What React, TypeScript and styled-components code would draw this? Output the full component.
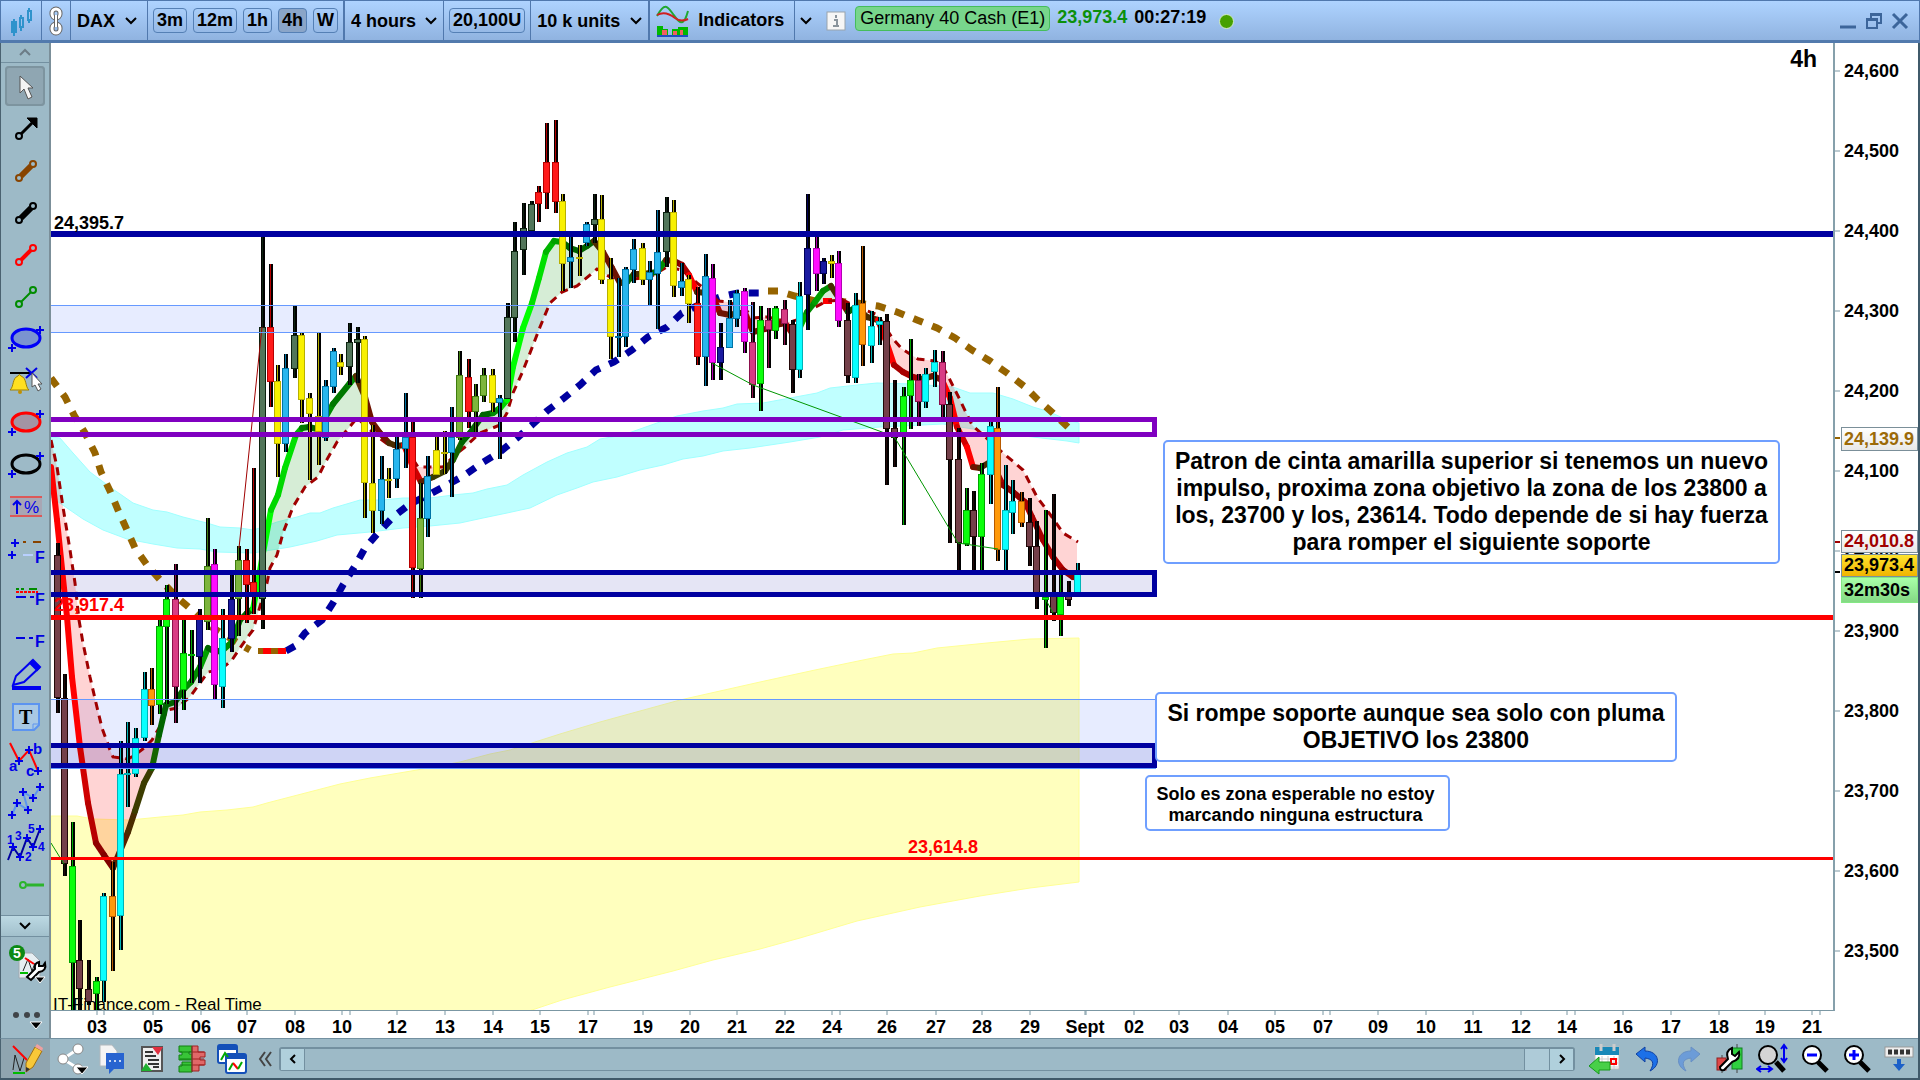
import React from "react";
import styled, { createGlobalStyle, css } from "styled-components";

const GlobalStyle = createGlobalStyle`
  * { box-sizing: border-box; }
  body { margin: 0; background: #405a6a; font-family: "Liberation Sans", Arial, sans-serif; color: #000; }
  button, select { font: inherit; color: inherit; }
`;

/* ---------- layout ---------- */

const Window = styled.div`
  display: flex;
  flex-direction: column;
  height: 100vh;
  padding: 0 2px 2px 0;
  overflow: hidden;
`;

const TopBar = styled.header`
  flex: none;
  display: flex;
  align-items: stretch;
  height: 43px;
  margin-right: -2px;
  border: 1px solid #5078ad;
  border-bottom: 3px solid #527aad;
  background: linear-gradient(#aed3ff, #90b3e0);
  font-size: 18px;
  font-weight: bold;
`;

const Group = styled.div<{ $w?: number; $strong?: boolean; $pad?: number }>`
  display: flex;
  align-items: center;
  justify-content: space-between;
  gap: 6px;
  padding: 0 ${(p) => p.$pad ?? 6}px 0 ${(p) => (p.$pad === 5 ? 5 : 6)}px;
  min-width: ${(p) => (p.$w ? `${p.$w}px` : "auto")};
  border-right: ${(p) => (p.$strong ? 2 : 1)}px solid #5078ad;
`;

const plainButton = css`
  display: flex;
  align-items: center;
  justify-content: center;
  padding: 0;
  border: 0;
  background: none;
`;

const IconButton = styled.button`
  ${plainButton}
`;

const FrameButton = styled.button<{ $on?: boolean }>`
  height: 25px;
  padding: 0 3px;
  border: 1px solid #5580b5;
  border-radius: 4px;
  background: ${(p) => (p.$on ? "#8aa5c8" : "transparent")};
  font-weight: bold;
  line-height: 23px;
  white-space: nowrap;
`;

const Picker = styled.label`
  display: flex;
  flex: 1;
  align-items: center;
  justify-content: space-between;
`;

const Select = styled.select`
  appearance: none;
  border: 0;
  padding: 0;
  background: none;
  font-weight: bold;
`;

const IndicatorButton = styled.button`
  ${plainButton}
  gap: 8px;
  font-weight: bold;
`;

const Quote = styled.div`
  flex: 1;
  display: flex;
  align-items: flex-start;
  gap: 7px;
  padding: 5px 0 0 7px;
  line-height: 23px;
`;

const Instrument = styled.span`
  padding: 0 4px;
  border: 1px solid #45bd5c;
  border-radius: 4px;
  background: #78d58c;
  font-weight: normal;
`;

const LastPrice = styled.span`
  color: #0b900b;
`;

const InfoButton = styled.button`
  ${plainButton}
  margin: 5px 2px 0 0;
`;

const LiveDot = styled.span`
  width: 15px;
  height: 15px;
  margin: 8px 0 0 6px;
  border: 1px solid #d4ecc8;
  border-radius: 50%;
  background: #45a000;
`;

const WindowControls = styled.div`
  display: flex;
  align-items: center;
  gap: 8px;
  padding-right: 10px;
`;

const Middle = styled.div`
  flex: 1;
  display: flex;
  min-height: 0;
`;

const Sidebar = styled.nav`
  flex: none;
  display: flex;
  flex-direction: column;
  width: 51px;
  border-left: 1px solid #4a6270;
  border-right: 2px solid #7b8f99;
  background: #9dbac7;
`;

const EdgeButton = styled.button<{ $raised?: boolean }>`
  ${plainButton}
  flex: none;
  height: ${(p) => (p.$raised ? 22 : 20)}px;
  border-bottom: 1px solid #7390a0;
  ${(p) =>
    p.$raised &&
    css`
      border-top: 1px solid #7390a0;
      background: linear-gradient(#bcd9e3, #a2c0cc);
    `}
`;

const Tools = styled.div`
  flex: 1;
  padding-top: 2px;
  min-height: 0;
  overflow: hidden;
`;

const Tool = styled.button<{ $on?: boolean }>`
  ${plainButton}
  width: 48px;
  height: 42px;
  ${(p) =>
    p.$on &&
    css`
      box-shadow: inset 0 0 0 2px #7d949f;
      background: #8fa6b2;
      border-radius: 4px;
      width: 40px;
      height: 40px;
      margin: 1px 4px;
    `}
`;

const SideMenu = styled.button<{ $h: number }>`
  ${plainButton}
  flex: none;
  width: 48px;
  height: ${(p) => p.$h}px;
`;

const Workspace = styled.main`
  flex: 1;
  min-width: 0;
  display: grid;
  grid-template-columns: 1fr 83px;
  grid-template-rows: 1fr 27px;
  background: #fff;
`;

const ChartPane = styled.section`
  position: relative;
  min-height: 0;
  overflow: hidden;
  border-right: 2px solid #86a0ab;
  border-bottom: 1px solid #7b97a3;
`;

const Drawing = styled.svg`
  display: block;
  width: 100%;
  height: 100%;
  font-size: 18px;
  font-weight: bold;
`;

const PriceAxis = styled.aside`
  position: relative;
  overflow: hidden;
`;

const TimeAxis = styled.div`
  grid-column: 1 / -1;
  overflow: hidden;
`;

const Note = styled.div<{ $x: number; $y: number; $w: number; $small?: boolean }>`
  position: absolute;
  left: ${(p) => p.$x}px;
  top: ${(p) => p.$y}px;
  width: ${(p) => p.$w}px;
  padding: ${(p) => (p.$small ? "7px 8px 3px 4px" : "6px 0")};
  border: 2px solid #6f9fff;
  border-radius: 5px;
  background: #fff;
  font-size: ${(p) => (p.$small ? 18 : 23)}px;
  font-weight: bold;
  line-height: ${(p) => (p.$small ? 21 : 27)}px;
  text-align: center;
  white-space: pre-line;
`;

const Tag = styled.span<{ $y: number; $h: number; $bg: string; $fg: string; $edge: string }>`
  position: absolute;
  left: 6px;
  right: 0;
  top: ${(p) => p.$y}px;
  height: ${(p) => p.$h}px;
  padding-left: 2px;
  border: 1px solid ${(p) => p.$edge};
  background: ${(p) => p.$bg};
  color: ${(p) => p.$fg};
  font-size: 18px;
  font-weight: bold;
  line-height: ${(p) => p.$h - 2}px;
`;

const BottomBar = styled.footer`
  flex: none;
  display: flex;
  align-items: center;
  height: 40px;
  padding-right: 4px;
  border-top: 1px solid #7390a0;
  border-left: 1px solid #4a6270;
  background: #9dbac7;
`;

const DrawCell = styled.button`
  ${plainButton}
  width: 49px;
  height: 39px;
  margin-right: 6px;
  background: #8fa5b0;
`;

const BarIcons = styled.div<{ $gap: number }>`
  display: flex;
  align-items: center;
  gap: ${(p) => p.$gap}px;
`;

const ScrollTrack = styled.div`
  flex: 1;
  display: flex;
  height: 24px;
  margin: 0 13px 0 6px;
  border: 1px solid #7390a0;
  border-top: 2px solid #7390a0;
  border-radius: 3px;
`;

const ScrollStep = styled.button`
  ${plainButton}
  width: 25px;
  border-left: 1px solid #7390a0;
  border-right: 1px solid #7390a0;
  background: #b0d0dc;
`;

const ScrollGap = styled.div`
  flex: 1;
`;

const ScrollThumb = styled.div`
  width: 25px;
  border-left: 1px solid #7390a0;
  background: #aecbd8;
`;

/* ---------- chart data ---------- */

const INK: Record<string, [string, string]> = {
  dk: ["#74404a", "#220808"],
  gr: ["#0cff0c", "#00a800"],
  cy: ["#0affff", "#00b4b8"],
  or: ["#ff990a", "#b85a00"],
  bl: ["#28b6ee", "#0074a6"],
  ye: ["#f8f000", "#b8b000"],
  re: ["#ff1a1a", "#b80000"],
  sg: ["#52765a", "#0c220f"],
  ol: ["#7db53c", "#3e7c0e"],
  mg: ["#ff0cff", "#b400b4"],
  pk: ["#d83c84", "#8c104c"],
  nv: ["#1a1aa0", "#000058"],
};

type Candle = [number, number, number, number, number, string];

/* x, high, body top, body bottom, low, ink */
const CANDLES: Candle[] = [
  [57, 543, 555, 698, 713, "dk"], [64, 674, 698, 864, 876, "dk"], [72, 822, 866, 963, 1011, "gr"],
  [79, 920, 960, 989, 1011, "dk"], [88, 960, 989, 1002, 1005, "dk"], [96, 977, 981, 994, 1011, "gr"],
  [103, 893, 896, 981, 1002, "cy"], [112, 862, 896, 917, 971, "or"], [120, 741, 774, 916, 950, "cy"],
  [127, 722, 773, 775, 807, "cy"], [135, 728, 738, 774, 777, "cy"], [144, 672, 689, 738, 741, "cy"],
  [151, 668, 689, 706, 725, "or"], [159, 618, 626, 705, 714, "gr"], [166, 585, 599, 627, 704, "gr"],
  [175, 564, 599, 687, 723, "pk"], [183, 618, 653, 690, 710, "gr"], [191, 630, 654, 656, 683, "gr"],
  [199, 609, 619, 657, 683, "nv"], [207, 518, 566, 622, 630, "ol"], [214, 549, 564, 685, 699, "mg"],
  [222, 609, 638, 687, 708, "cy"], [231, 575, 599, 639, 652, "nv"], [238, 546, 560, 599, 636, "ol"],
  [246, 549, 560, 585, 623, "re"], [253, 468, 582, 597, 614, "re"], [262, 237, 327, 599, 629, "sg"],
  [270, 264, 327, 382, 407, "re"], [277, 365, 381, 444, 477, "ye"], [285, 354, 368, 444, 452, "bl"],
  [294, 306, 335, 369, 378, "sg"], [301, 333, 335, 400, 423, "ye"], [309, 393, 398, 414, 480, "ye"],
  [318, 333, 416, 432, 465, "ye"], [325, 380, 386, 438, 441, "bl"], [333, 348, 351, 387, 393, "bl"],
  [340, 354, 362, 367, 375, "ye"], [349, 323, 342, 367, 385, "sg"], [357, 327, 339, 343, 383, "sg"],
  [364, 336, 339, 483, 518, "ye"], [372, 425, 483, 511, 533, "ye"], [381, 456, 479, 511, 524, "bl"],
  [388, 468, 479, 481, 498, "ye"], [396, 435, 449, 479, 488, "bl"], [405, 393, 437, 449, 468, "bl"],
  [412, 420, 437, 568, 598, "re"], [420, 483, 518, 569, 598, "ol"], [427, 456, 476, 519, 537, "bl"],
  [436, 435, 450, 475, 475, "ye"], [444, 431, 452, 454, 474, "ye"], [451, 407, 437, 453, 497, "bl"],
  [459, 351, 375, 438, 440, "ol"], [468, 359, 377, 412, 428, "re"], [475, 384, 396, 412, 432, "ol"],
  [483, 368, 375, 396, 402, "ol"], [492, 369, 375, 403, 412, "ye"], [499, 395, 398, 403, 459, "bl"],
  [507, 303, 317, 399, 399, "sg"], [514, 222, 251, 318, 342, "sg"], [523, 203, 228, 250, 275, "sg"],
  [531, 201, 204, 231, 231, "sg"], [538, 186, 192, 204, 222, "re"], [546, 123, 162, 193, 209, "re"],
  [555, 120, 162, 202, 213, "re"], [562, 194, 201, 264, 291, "ye"], [570, 237, 257, 262, 288, "bl"],
  [579, 245, 257, 259, 276, "ye"], [586, 222, 224, 243, 246, "bl"], [594, 194, 219, 225, 243, "sg"],
  [601, 195, 219, 280, 284, "ye"], [610, 258, 279, 337, 359, "ye"], [618, 278, 336, 338, 357, "bl"],
  [625, 267, 269, 337, 347, "bl"], [633, 239, 249, 270, 283, "bl"], [642, 243, 248, 280, 285, "ye"],
  [649, 261, 272, 280, 305, "bl"], [657, 210, 252, 274, 329, "bl"], [666, 197, 212, 252, 267, "sg"],
  [673, 200, 212, 286, 297, "ye"], [681, 263, 281, 288, 296, "bl"], [688, 275, 279, 304, 323, "ye"],
  [697, 287, 303, 357, 365, "re"], [705, 254, 276, 357, 386, "bl"], [712, 264, 278, 363, 380, "mg"],
  [720, 323, 347, 363, 380, "nv"], [729, 300, 318, 348, 348, "bl"], [736, 290, 293, 319, 327, "bl"],
  [744, 288, 291, 342, 353, "mg"], [752, 302, 342, 385, 398, "pk"], [760, 306, 320, 384, 411, "gr"],
  [768, 308, 320, 330, 368, "pk"], [775, 306, 308, 331, 339, "gr"], [784, 300, 309, 324, 345, "pk"],
  [792, 320, 324, 370, 393, "dk"], [799, 282, 296, 370, 378, "cy"], [807, 194, 248, 295, 330, "nv"],
  [816, 237, 248, 274, 291, "mg"], [823, 258, 261, 274, 284, "nv"], [831, 255, 261, 264, 278, "ye"],
  [838, 251, 263, 321, 327, "mg"], [847, 303, 320, 376, 383, "dk"], [855, 293, 305, 378, 383, "cy"],
  [862, 246, 303, 345, 366, "or"], [871, 311, 326, 346, 363, "cy"], [879, 317, 321, 325, 345, "cy"],
  [886, 314, 321, 429, 485, "dk"], [894, 380, 428, 438, 467, "dk"], [903, 387, 396, 437, 525, "gr"],
  [910, 339, 380, 396, 429, "gr"], [918, 374, 380, 402, 426, "pk"], [925, 368, 374, 402, 408, "cy"],
  [934, 350, 362, 372, 387, "cy"], [942, 351, 362, 405, 417, "pk"], [949, 392, 404, 460, 543, "dk"],
  [958, 428, 459, 543, 571, "dk"], [966, 488, 510, 544, 546, "gr"], [973, 491, 510, 537, 571, "dk"],
  [981, 463, 474, 537, 571, "gr"], [990, 418, 426, 475, 504, "cy"], [997, 387, 428, 550, 561, "or"],
  [1005, 465, 510, 550, 571, "cy"], [1012, 480, 501, 513, 534, "cy"], [1021, 492, 501, 523, 527, "or"],
  [1029, 498, 522, 547, 566, "dk"], [1036, 521, 546, 593, 609, "dk"], [1045, 510, 597, 600, 648, "gr"],
  [1053, 494, 596, 613, 621, "dk"], [1060, 573, 596, 615, 636, "gr"], [1068, 581, 595, 600, 606, "dk"],
  [1077, 563, 572, 593, 593, "cy"],
];

const R = "#ff0000", R2 = "#d00000", R3 = "#a80000", MR = "#6e1200", BR = "#4a2c00", OL = "#3c3c00";
const DG = "#006400", MG = "#008c00", LG = "#00b400", G = "#00ff00";

/* x, y, colour of the stretch that ends here */
const TREND: [number, number, string][] = [
  [51, 467, R], [57, 520, R], [67, 617, R], [72, 677, R], [80, 747, R], [88, 803, R2], [96, 843, "#b80000"],
  [104, 855, "#900000"], [113, 868, "#800000"], [128, 832, "#5a2000"], [135, 811, BR], [144, 783, OL], [152, 768, OL],
  [159, 735, "#146400"], [166, 705, DG], [175, 702, DG], [184, 689, DG], [191, 682, MG], [200, 667, MG],
  [208, 648, "#00a000"], [215, 652, DG], [223, 650, DG], [232, 642, MG], [240, 620, MG], [247, 613, DG],
  [253, 609, DG], [258, 583, G], [263, 553, G], [271, 510, G], [278, 495, "#00d800"], [285, 468, "#00d800"],
  [296, 435, "#00e000"], [302, 428, LG], [309, 427, "#007800"], [317, 429, DG], [325, 418, DG], [333, 404, MG],
  [350, 383, "#007800"], [356, 376, MG], [365, 397, "#5a2a00"], [372, 422, MR], [380, 433, MR], [389, 443, MR],
  [397, 446, BR], [404, 445, BR], [413, 467, R], [421, 482, R2], [433, 477, "#5a2000"], [445, 471, OL],
  [453, 460, OL], [462, 442, "#146400"], [470, 433, DG], [483, 415, DG], [493, 413, DG], [500, 408, MG],
  [507, 400, "#00d000"], [513, 367, G], [523, 328, G], [532, 303, G], [539, 278, "#00e000"], [546, 252, "#00e000"],
  [554, 241, LG], [562, 242, "#00a000"], [570, 248, DG], [579, 251, DG], [587, 246, DG], [594, 241, DG],
  [603, 252, BR], [612, 268, MR], [620, 283, MR], [627, 282, BR], [634, 274, DG], [643, 274, BR], [650, 273, BR],
  [657, 272, DG], [666, 260, MG], [674, 261, MR], [682, 265, "#800000"], [689, 275, R3], [697, 292, R],
  [706, 293, BR], [713, 297, R3], [720, 313, R3], [730, 315, MR], [738, 313, BR], [745, 313, BR], [753, 332, R3],
  [761, 330, MR], [770, 328, "#800000"], [780, 324, MR], [785, 323, MR], [792, 333, R3], [800, 327, MG],
  [807, 312, LG], [815, 302, MG], [823, 291, "#00a000"], [831, 286, MG], [840, 300, BR], [848, 312, "#800000"],
  [856, 307, DG], [867, 317, BR], [878, 320, BR], [885, 338, R], [894, 365, R], [903, 372, R3], [913, 377, R3],
  [922, 379, R3], [933, 376, BR], [942, 380, MR], [950, 398, R], [957, 427, R], [967, 447, R2], [973, 467, R],
  [980, 468, MR], [990, 462, BR], [998, 475, R3], [1003, 485, R3], [1013, 492, "#900000"], [1025, 502, "#900000"],
  [1032, 517, R3], [1043, 540, R3], [1053, 557, R3], [1063, 570, "#b00000"], [1073, 577, "#900000"], [1078, 577, "#900000"],
];

const SIGNAL: [number, number][] = [
  [51, 440], [57, 467], [63, 507], [70, 550], [75, 583], [79, 620], [83, 643], [90, 677], [96, 703], [102, 728],
  [110, 750], [113, 757], [128, 759], [135, 755], [144, 748], [152, 740], [162, 723], [167, 710], [177, 708],
  [190, 697], [200, 683], [208, 672], [220, 670], [232, 660], [240, 648], [247, 638], [253, 630], [258, 613],
  [267, 583], [270, 568], [277, 555], [283, 533], [293, 507], [305, 487], [318, 477], [325, 463], [337, 442],
  [352, 424], [357, 418], [365, 425], [378, 437], [390, 446], [405, 447], [418, 467], [443, 467], [455, 455],
  [465, 447], [480, 433], [500, 425], [507, 413], [513, 393], [522, 373], [530, 353], [540, 327], [550, 303],
  [562, 292], [577, 286], [597, 269], [610, 277], [620, 283], [633, 279], [650, 277], [667, 267], [682, 270],
  [697, 283], [710, 293], [718, 301], [728, 302], [745, 308], [752, 318], [767, 317], [790, 322], [803, 318],
  [810, 310], [827, 301], [843, 300], [857, 307], [878, 315], [885, 327], [893, 339], [902, 349], [918, 359],
  [935, 361], [943, 367], [950, 380], [960, 400], [972, 425], [983, 435], [1002, 452], [1023, 470], [1037, 497],
  [1052, 517], [1063, 533], [1078, 542],
];

const SLOW: [string, string][] = [
  ["#966400", "51,378 65,397 74,415 85,433 95,453 101,472 110,491 118,510 127,530 135,548 147,565 162,582 178,598 192,610 208,625 225,635 243,646 250,650"],
  ["#0000a0", "286,651 295,646 305,633 322,620 333,603 343,585 355,566 365,548 378,533 393,517 410,504 430,494 447,485 465,475 482,463 500,452 517,438 532,425 547,411 564,398 580,385 596,370 614,362 632,350 648,337 667,327 682,313 703,303 720,297 738,293 762,293"],
  ["#966400", "768,291 778,291 795,296 815,301 823,301"],
  ["#966400", "836,301 857,303 878,306 897,312 917,320 937,328 955,338 972,350 990,361 1007,373 1025,387 1038,400 1053,413 1070,429 1075,433"],
];

const CYAN_CLOUD =
  "51,437 60,438 73,453 90,472 110,487 133,503 153,510 167,512 183,517 207,523 220,527 240,528 253,530 263,527 277,522 297,517 310,513 320,513 333,508 350,503 360,500 383,500 403,498 430,498 453,495 473,493 487,489 507,485 523,475 547,462 567,453 587,447 600,439 623,435 657,423 677,416 703,411 723,408 737,404 763,403 790,398 817,393 830,388 857,385 877,383 913,384 953,387 970,393 993,393 1013,399 1033,407 1050,412 1067,420 1079,423 1079,443 1067,441 1033,437 997,433 980,430 960,427 943,424 880,427 843,430 820,437 790,442 750,448 723,451 703,456 683,459 663,465 640,470 617,477 593,482 577,488 557,495 530,508 507,513 483,518 460,523 430,526 403,528 370,532 337,535 317,541 290,547 253,553 217,552 200,549 177,548 153,544 127,539 103,530 83,519 67,508 51,497";

const YELLOW_CLOUD =
  "51,816 77,816 93,819 130,820 150,818 160,817 183,815 200,812 227,810 253,807 267,803 290,797 317,790 340,784 370,778 417,770 460,762 490,754 510,750 560,734 600,722 680,700 760,682 815,670 863,660 893,654 913,653 937,648 957,646 987,643 1030,639 1079,638 1079,882 1030,888 980,896 920,907 857,921 800,938 760,949 713,960 673,971 610,987 562,1000 529,1011 51,1011";

const PRICES = Array.from({ length: 12 }, (_, i) => 24600 - i * 100);
const priceY = (p: number) => Math.round(28 + (24600 - p) * 0.8);

const DATES: [number, string][] = [
  [97, "03"], [153, "05"], [201, "06"], [247, "07"], [295, "08"], [342, "10"], [397, "12"], [445, "13"], [493, "14"],
  [540, "15"], [588, "17"], [643, "19"], [690, "20"], [737, "21"], [785, "22"], [832, "24"], [887, "26"], [936, "27"],
  [982, "28"], [1030, "29"], [1085, "Sept"], [1134, "02"], [1179, "03"], [1228, "04"], [1275, "05"], [1323, "07"],
  [1378, "09"], [1426, "10"], [1473, "11"], [1521, "12"], [1567, "14"], [1623, "16"], [1671, "17"], [1719, "18"],
  [1765, "19"], [1812, "21"],
];
const MINOR_TICKS = [104, 350, 594, 840, 1086, 1330, 1575, 1820];

/* Linear interpolation along a line of points. */
function at(points: readonly (readonly [number, number, ...unknown[]])[], x: number) {
  for (let i = 1; i < points.length; i++) {
    const [x0, y0] = points[i - 1];
    const [x1, y1] = points[i];
    if (x <= x1) return y0 + ((y1 - y0) * (x - x0)) / (x1 - x0);
  }
  return points[points.length - 1][1];
}

/* The shaded area between the trend line and the signal line. */
function band(from: number, to: number, rising: boolean) {
  const top: string[] = [];
  const bottom: string[] = [];
  for (let x = from; x <= to; x += 2) {
    const a = at(TREND as never, x);
    const b = at(SIGNAL, x);
    top.push(`${x},${a.toFixed(1)}`);
    bottom.unshift(`${x},${(rising ? Math.max(a, b) : Math.min(a, b)).toFixed(1)}`);
  }
  return [...top, ...bottom].join(" ");
}

const BANDS: [number, number, boolean][] = [
  [51, 163, false], [163, 363, true], [411, 443, false], [455, 609, true], [621, 700, false], [700, 791, false],
  [803, 841, true], [877, 1078, false],
];

/* ---------- chart ---------- */

function Chart() {
  return (
    <Drawing role="img" aria-label="DAX 4 hours candlestick chart">
      <g transform="translate(-51 -43)">
        <polygon points={YELLOW_CLOUD} fill="#ffffbe" stroke="#ffff96" />
        <polygon points={CYAN_CLOUD} fill="#c0ffff" stroke="#a0ffff" />
        <rect x="40" y="305" width="713" height="27" fill="rgba(60,100,255,.12)" />
        <rect x="40" y="699" width="1115" height="70" fill="rgba(60,100,255,.12)" />
        <rect x="40" y="572" width="1115" height="23" fill="rgba(0,0,160,.1)" />
        <rect x="40" y="746" width="1115" height="20" fill="rgba(0,0,160,.1)" />
        {BANDS.map(([a, b, up]) => (
          <polygon key={a} points={band(a, b, up)} fill={up ? "rgba(0,140,0,.16)" : "rgba(255,0,0,.17)"} />
        ))}
        {SLOW.map(([c, pts]) => (
          <polyline key={pts} points={pts} fill="none" stroke={c} strokeWidth="7" strokeDasharray="10 10" />
        ))}
        <path d="M258 651h5M271 651h7" stroke="#966400" strokeWidth="6" />
        <path d="M263 651h8M278 651h8M823 301h9" stroke="#f00" strokeWidth="6" />
        <polyline points={SIGNAL.map((p) => p.join(",")).join(" ")} fill="none" stroke="#a00000" strokeWidth="3" strokeDasharray="8 6" />
        {TREND.slice(1).map(([x, y, c], i) => (
          <line key={i} x1={TREND[i][0]} y1={TREND[i][1]} x2={x} y2={y} stroke={c} strokeWidth="6" strokeLinecap="round" />
        ))}
        <g shapeRendering="crispEdges">
          {CANDLES.map(([x, hi, top, bot, lo, ink]) => {
            const [fill, edge] = INK[ink];
            return (
              <g key={x}>
                <rect x={x - 1} y={hi} width="4" height={lo - hi} fill="#000" />
                <rect x={x} y={hi} width="1" height={lo - hi} fill={edge} />
                <rect x={x - 3} y={top} width="7" height={bot - top} fill={edge} />
                {bot - top > 2 && <rect x={x - 2} y={top + 1} width="5" height={bot - top - 2} fill={fill} />}
              </g>
            );
          })}
        </g>
        <path d="M239 548L262 327" stroke="#a00000" fill="none" />
        <path d="M51 843L64 864M712 363L753 385L882 432L895 438L958 543L998 549M1046 600L1053 613" stroke="#009600" fill="none" />
        <g shapeRendering="crispEdges">
          <path d="M40 305.5H752.5V332.5H40M40 699.5H1155.5V768.5H40" stroke="#6699ff" fill="none" />
          <path d="M40 234H4000" stroke="#0000a0" strokeWidth="6" />
          <path d="M40 419.5H1154.5V434.5H40" stroke="#8000c0" strokeWidth="5" fill="none" />
          <path d="M40 572.5H1154.5V594.5H40M40 745.5H1154.5V765.5H40" stroke="#0000a0" strokeWidth="5" fill="none" />
          <path d="M40 617.5H4000" stroke="#f00" strokeWidth="5" />
          <path d="M40 858.5H4000" stroke="#f00" strokeWidth="3" />
        </g>
        <text x="54" y="229">24,395.7</text>
        <text x="54" y="611" fill="#f00">23,917.4</text>
        <text x="908" y="853" fill="#f00">23,614.8</text>
        <text x="53" y="1010" fontSize="17" fontWeight="normal">IT-Finance.com - Real Time</text>
      </g>
      <text x="100%" y="24" dx="-16" textAnchor="end" fontSize="23">4h</text>
    </Drawing>
  );
}

/* ---------- icons ---------- */

const Chevron = ({ d = "M1 2l5 5 5-5", color = "#000" }: { d?: string; color?: string }) => (
  <svg width="12" height="10" fill="none" stroke={color} strokeWidth="2"><path d={d} /></svg>
);

const Plus = ({ x, y }: { x: number; y: number }) => (
  <path d={`M${x - 4} ${y}h8M${x} ${y - 4}v8`} stroke="#0000e8" strokeWidth="2" />
);

const Segment = ({ color, w }: { color: string; w: number }) => (
  <g stroke={color} fill="none">
    <path d="M21 27L31 17" strokeWidth={w} />
    <circle cx="19" cy="29" r="3" strokeWidth="2" />
    <circle cx="33" cy="15" r="3" strokeWidth="2" />
  </g>
);

const Oval = ({ color, fill }: { color: string; fill: string }) => (
  <g>
    <ellipse cx="26" cy="21" rx="14" ry="9" fill={fill} stroke={color} strokeWidth="3" />
    <Plus x={40} y={13} />
    <Plus x={12} y={31} />
  </g>
);

const BlueF = () => <text x="35" y="36" fontSize="16" fontWeight="bold" fill="#0000e0">F</text>;

const TOOLS: [string, React.ReactNode][] = [
  ["Pointer", <path d="M20 11V28L24 24L28 34L32 32L28 23H33Z" fill="#f4f4f4" stroke="#555" />],
  ["Arrow", <g stroke="#000"><path d="M21 27L34 14" strokeWidth="3" /><path d="M27 11H37V21Z" /><circle cx="19" cy="29" r="3" fill="none" strokeWidth="2" /></g>],
  ["Brown segment", <Segment color="#884400" w={6} />],
  ["Black segment", <Segment color="#000" w={6} />],
  ["Red segment", <Segment color="#f00" w={4} />],
  ["Green segment", <Segment color="#008c00" w={2} />],
  ["Blue ellipse", <Oval color="#0000f8" fill="rgba(80,100,220,.45)" />],
  ["Alert", <g><path d="M10 14H32" stroke="#000" strokeWidth="2" /><path d="M10 31c4-3 2-12 8-14q1-3 3 0c6 2 4 11 8 14z" fill="#ffe020" stroke="#a08000" /><circle cx="20" cy="33" r="2" fill="#c09000" /><path d="M26 9L37 19M37 9L26 19" stroke="#0000e8" strokeWidth="2" /><path d="M32 14V28L35 26L38 32L41 30L38 25H42Z" fill="#fff" stroke="#555" /></g>],
  ["Red ellipse", <Oval color="#f00" fill="rgba(170,110,130,.5)" />],
  ["Black ellipse", <Oval color="#000" fill="none" />],
  ["Variation", <g><path d="M10 12h32v19h-32z" fill="#a8a6b4" /><path d="M10 12h32M10 31h32" stroke="#dc5858" strokeWidth="2" /><path d="M17 29V16M13 20l4-4 4 4" stroke="#0000e8" strokeWidth="2" fill="none" /><text x="24" y="28" fontSize="17" fill="#0000e8">%</text></g>],
  ["Fibonacci extension", <g><Plus x={15} y={16} /><Plus x={12} y={28} /><path d="M23 15h3M33 15h8" stroke="#884400" strokeWidth="2" /><path d="M23 28h10" stroke="#b8d0ff" strokeWidth="2" /><BlueF /></g>],
  ["Fibonacci levels", <g strokeWidth="2"><path d="M16 20h3M21 20h3M29 20h8" stroke="#008c00" /><path d="M16 23h22" stroke="#f00" strokeDasharray="3 1" /><path d="M16 28h10M30 28h4" stroke="#0000e0" /><g strokeWidth="0"><BlueF /></g></g>],
  ["Fibonacci time", <g><path d="M16 27h9M29 27h4" stroke="#0000e0" strokeWidth="2" /><BlueF /></g>],
  ["Free drawing", <g fill="none" stroke="#0000f0" strokeWidth="2"><path d="M12 35h29" strokeWidth="4" /><path d="M13 32L16 23L32 8L39 15L24 29Z" /><path d="M30 10L37 17L40 14L33 7Z" fill="#0000f0" /></g>],
  ["Text", <g><path d="M13 9h26v21l-5 5H13z" fill="#a8c8e4" stroke="#5c94f0" strokeWidth="2" /><path d="M39 29h-6v6" fill="none" stroke="#5c94f0" /><text x="19" y="29" fontSize="20" fontWeight="bold" fontFamily="Liberation Serif, serif">T</text></g>],
  ["ABC pattern", <g fill="#0000e8" fontSize="15" fontWeight="bold"><path d="M10 6L19 24L29 13L38 34" stroke="#f00" strokeWidth="2" fill="none" /><Plus x={19} y={24} /><Plus x={29} y={13} /><Plus x={38} y={34} /><text x="9" y="34">a</text><text x="33" y="17">b</text><text x="26" y="39">c</text></g>],
  ["Polyline", <g><path d="M12 36L17 24L28 31L23 13L33 19L40 8" stroke="#5c94f0" fill="none" strokeWidth="2" /><Plus x={12} y={36} /><Plus x={17} y={24} /><Plus x={28} y={31} /><Plus x={23} y={13} /><Plus x={33} y={19} /><Plus x={40} y={8} /></g>],
  ["Elliott waves", <g fill="#0000e8" fontSize="12" fontWeight="bold"><path d="M8 39L13 26L20 36L27 17L33 26L40 8" stroke="#0000a0" strokeWidth="2" fill="none" /><Plus x={13} y={26} /><Plus x={20} y={36} /><Plus x={27} y={17} /><Plus x={33} y={26} /><Plus x={40} y={8} /><text x="7" y="23">1</text><text x="15" y="19">3</text><text x="28" y="12">5</text><text x="25" y="40">2</text><text x="38" y="30">4</text></g>],
  ["Horizontal ray", <g stroke="#2cb42c" fill="none"><path d="M27 22H44" strokeWidth="3" /><circle cx="23" cy="22" r="3" strokeWidth="2" /></g>],
];

const Lens = ({ sign, fill = "#fff" }: { sign: string; fill?: string }) => (
  <svg width="30" height="32">
    <path d="M18 19L27 28" stroke="#000" strokeWidth="5" />
    <circle cx="12" cy="12" r="9" fill={fill} stroke="#000" strokeWidth="2" />
    <path d={sign} stroke="#0000ff" strokeWidth="3" fill="none" />
  </svg>
);

const wrench = "M6 24L14 16Q11 8 18 5V11L21 13L25 9Q27 16 18 19L10 27Q6 28 6 24Z";

const NOTES = [
  { x: 1112, y: 397, w: 617, small: false, text: "Patron de cinta amarilla superior si tenemos un nuevo\nimpulso, proxima zona objetivo la zona de los 23800 a\nlos, 23700 y los, 23614. Todo depende de si hay fuerza\npara romper el siguiente soporte" },
  { x: 1104, y: 649, w: 522, small: false, text: "Si rompe soporte aunque sea solo con pluma\nOBJETIVO los 23800" },
  { x: 1094, y: 732, w: 305, small: true, text: "Solo es zona esperable no estoy\nmarcando ninguna estructura" },
];

const GREY_TAG = "linear-gradient(#fff, #e8e8e8)";

export default function App() {
  return (
    <Window>
      <GlobalStyle />
      <TopBar>
        <Group $w={41}>
          <IconButton aria-label="Chart style">
            <svg width="26" height="30" fill="none" stroke="#2f93cc" strokeWidth="2">
              <path d="M7 13v4M7 26v4M14 9v3M14 21v4M22 2v3M22 14v3" />
              <rect x="5" y="16" width="4" height="10" fill="#2f93cc" /><rect x="13" y="12" width="3" height="9" /><rect x="21" y="5" width="3" height="9" />
            </svg>
          </IconButton>
        </Group>
        <Group $w={29}>
          <IconButton aria-label="Link charts">
            <svg width="16" height="32" fill="none">
              <g stroke="#666" strokeWidth="5"><rect x="4" y="4" width="8" height="9" rx="4" /><rect x="4" y="19" width="8" height="9" rx="4" /></g>
              <g stroke="#fff" strokeWidth="3"><rect x="4" y="4" width="8" height="9" rx="4" /><rect x="4" y="19" width="8" height="9" rx="4" /></g>
              <path d="M8 10V22" stroke="#666" strokeWidth="4" /><path d="M8 10V22" stroke="#fff" strokeWidth="2" />
            </svg>
          </IconButton>
        </Group>
        <Group $w={77} $pad={10}>
          <Picker><Select aria-label="Instrument"><option>DAX</option></Select><Chevron /></Picker>
        </Group>
        <Group $w={196} $strong $pad={5}>
          <FrameButton>3m</FrameButton>
          <FrameButton>12m</FrameButton>
          <FrameButton>1h</FrameButton>
          <FrameButton $on>4h</FrameButton>
          <FrameButton>W</FrameButton>
        </Group>
        <Group $w={99}>
          <Picker><Select aria-label="Timeframe"><option>4 hours</option></Select><Chevron /></Picker>
        </Group>
        <Group $w={86} $pad={5}>
          <FrameButton>20,100U</FrameButton>
        </Group>
        <Group $w={119} $strong>
          <Picker><Select aria-label="Units"><option>10 k units</option></Select><Chevron /></Picker>
        </Group>
        <Group $w={145}>
          <IndicatorButton>
            <svg width="34" height="32">
              <path d="M1 11C9 -4 12 2 17 9S27 25 32 6" fill="none" stroke="#20a830" strokeWidth="2" />
              <path d="M1 10C8 6 14 9 19 13S28 16 32 14" fill="none" stroke="#d02020" strokeWidth="2" />
              <path d="M1 21h6v3h5v7H1zM16 24h6v-2h10v9H16z" fill="#00b800" />
              <path d="M6 25h5v5H6zM17 26h4v4h-4zM24 25h3v5h-3z" fill="#f06060" /><path d="M1 31h31" stroke="#2050c0" strokeWidth="2" />
            </svg>
            Indicators
          </IndicatorButton>
        </Group>
        <IconButton aria-label="Indicator list"><svg width="24" height="10" fill="none" stroke="#000" strokeWidth="2"><path d="M6 2l5 5 5-5" /></svg></IconButton>
        <Quote>
          <InfoButton aria-label="Information">
            <svg width="20" height="20"><rect x="1" y="1" width="18" height="18" fill="#f6f6f6" stroke="#9aa4ac" /><path d="M10 4v3M8 9h3v6M7 15h6" stroke="#8a949c" strokeWidth="2" fill="none" /></svg>
          </InfoButton>
          <Instrument>Germany 40 Cash (E1)</Instrument>
          <LastPrice>23,973.4</LastPrice>
          <span>00:27:19</span>
          <LiveDot />
        </Quote>
        <WindowControls>
          <IconButton aria-label="Minimize"><svg width="18" height="18"><path d="M1 15h16" stroke="#3c659a" strokeWidth="3" /></svg></IconButton>
          <IconButton aria-label="Restore"><svg width="18" height="18" fill="none" stroke="#3c659a" strokeWidth="2"><path d="M6 6V2h10v9h-4M6 3h10" /><path d="M2 7h10v9H2zM2 8h10" /></svg></IconButton>
          <IconButton aria-label="Close"><svg width="18" height="18" stroke="#3c659a" strokeWidth="3"><path d="M2 2L16 16M16 2L2 16" /></svg></IconButton>
        </WindowControls>
      </TopBar>

      <Middle>
        <Sidebar aria-label="Drawing tools">
          <EdgeButton aria-label="Scroll up"><Chevron d="M1 7l5-5 5 5" color="#6c7c86" /></EdgeButton>
          <Tools>
            {TOOLS.map(([name, icon], i) => (
              <Tool key={name} aria-label={name} $on={i === 0}>
                <svg width={i === 0 ? 40 : 48} height={i === 0 ? 40 : 42} viewBox={i === 0 ? "5 1 40 40" : "1 0 48 42"}>{icon}</svg>
              </Tool>
            ))}
          </Tools>
          <EdgeButton $raised aria-label="Scroll down"><Chevron /></EdgeButton>
          <SideMenu $h={54} aria-label="Templates">
            <svg width="48" height="54">
              <path d="M18 16h13l8 8v17H18z" fill="#e6eef2" stroke="#a0a8ae" /><path d="M22 34l5-12 4 12 3-8" fill="none" stroke="#222" />
              <path d="M24 21l9 6" stroke="#f00" strokeWidth="2" /><path d="M19 36h8" stroke="#0b0" strokeWidth="2" />
              <circle cx="16" cy="16" r="8" fill="#0c8a14" />
              <text x="12" y="21" fontSize="14" fontWeight="bold" fill="#fff">5</text>
              <path d="M26 40L34 32Q33 26 38 25L38 29L42 29L44 26Q46 34 38 35L30 43Z" fill="#fff" stroke="#000" strokeWidth="2" />
              <path d="M34 40h10l-5 6z" stroke="#fff" />
            </svg>
          </SideMenu>
          <SideMenu $h={47} aria-label="More options">
            <svg width="48" height="47" fill="#404448"><circle cx="15" cy="24" r="3" /><circle cx="26" cy="24" r="3" /><circle cx="36" cy="24" r="3" /><path d="M29 31h12l-6 7z" fill="#000" stroke="#fff" /></svg>
          </SideMenu>
        </Sidebar>

        <Workspace>
          <ChartPane>
            <Chart />
            {NOTES.map((n) => (
              <Note key={n.x} $x={n.x} $y={n.y} $w={n.w} $small={n.small}>{n.text}</Note>
            ))}
          </ChartPane>
          <PriceAxis>
            <Drawing>
              {PRICES.map((p) => (
                <g key={p}>
                  <path d={`M0 ${priceY(p)}h5`} stroke="#7b97a3" />
                  <text x="9" y={priceY(p) + 6}>{p.toLocaleString("en-US")}</text>
                </g>
              ))}
              <path d="M0 395h5" stroke="#966400" strokeWidth="2" /><path d="M0 499h5" stroke="#a00000" strokeWidth="2" /><path d="M0 529h5" stroke="#000" strokeWidth="2" />
            </Drawing>
            <Tag $y={384} $h={24} $bg={GREY_TAG} $fg="#9c6a08" $edge="#7b8f99">24,139.9</Tag>
            <Tag $y={487} $h={23} $bg={GREY_TAG} $fg="#a00000" $edge="#7b8f99">24,010.8</Tag>
            <Tag $y={511} $h={23} $bg="linear-gradient(#ffe430, #f0b400)" $fg="#000" $edge="#7b8f99">23,973.4</Tag>
            <Tag $y={534} $h={26} $bg="linear-gradient(#a8ffa8, #84d884)" $fg="#000" $edge="#84e884">32m30s</Tag>
          </PriceAxis>
          <TimeAxis>
            <Drawing textAnchor="middle">
              {DATES.map(([x, label]) => (
                <g key={x}>
                  <path d={`M${x - 51} 0v4`} stroke="#7b97a3" />
                  <text x={x - 51} y="22">{label}</text>
                </g>
              ))}
              {MINOR_TICKS.map((x) => <path key={x} d={`M${x - 51} 0v4`} stroke="#7b97a3" />)}
            </Drawing>
          </TimeAxis>
        </Workspace>
      </Middle>

      <BottomBar>
        <DrawCell aria-label="Draw">
          <svg width="34" height="34">
            <path d="M4 28L6 13L11 29L15 16" fill="none" stroke="#222" /><path d="M4 4L18 18" stroke="#f00" strokeWidth="2" /><path d="M4 31h12" stroke="#0b0" strokeWidth="2" />
            <path d="M17 21L26 5L33 9L24 25L17 30Z" fill="#f8c838" stroke="#a07010" /><path d="M26 5L28 2L34 6L33 9Z" fill="#f0a0a0" /><path d="M17 25v5l4-3z" fill="#333" />
          </svg>
        </DrawCell>
        <BarIcons $gap={10}>
          <IconButton aria-label="Share">
            <svg width="32" height="34"><path d="M22 7L7 17L23 27" stroke="#fff" strokeWidth="3" fill="none" /><circle cx="22" cy="7" r="5" fill="#fff" stroke="#888" /><circle cx="7" cy="17" r="5" fill="#fff" stroke="#888" /><circle cx="22" cy="27" r="5" fill="#fff" stroke="#888" /><path d="M20 25h12l-6 7z" stroke="#fff" /></svg>
          </IconButton>
          <IconButton aria-label="Comments">
            <svg width="28" height="32"><path d="M2 2h12l5 6v15H2z" fill="#f4f4f4" stroke="#b0b8bc" /><path d="M8 10h18v16h-10l-5 5v-5H8z" fill="#2864d0" /><g fill="#fff"><circle cx="12" cy="18" r="1" /><circle cx="17" cy="18" r="1" /><circle cx="22" cy="18" r="1" /></g></svg>
          </IconButton>
          <IconButton aria-label="Orders list">
            <svg width="32" height="28" viewBox="-4 0 32 28"><rect x="2" y="2" width="20" height="24" fill="#eee" stroke="#555" strokeWidth="2" /><path d="M5 7h8M5 11h11M8 15h11M8 19h11M13 22h6" stroke="#333" strokeWidth="2" /><path d="M12 2h11l-5 8z" fill="#e03040" /><path d="M1 26h11l-6-8z" fill="#20b030" /></svg>
          </IconButton>
          <IconButton aria-label="Order book">
            <svg width="28" height="28"><path d="M1 1h13v6h-3v2h3v6H1v-5h3V7H1zM4 17h10v10H1v-6h3z" fill="#38c438" stroke="#108010" /><path d="M14 1h6v6h7v5h-5v3h5v5h-6v6h-7z" fill="#e06868" stroke="#a02020" /><path d="M2 7h12M2 14h12M2 20h12" stroke="#108010" /><path d="M14 7h12M14 14h12M14 20h12" stroke="#a02020" /><path d="M14 1v26" stroke="#704030" /></svg>
          </IconButton>
          <IconButton aria-label="Windows">
            <svg width="32" height="32"><g stroke="#1450b8" strokeWidth="2" fill="#fff"><rect x="2" y="2" width="19" height="18" rx="2" /><rect x="10" y="11" width="20" height="19" rx="2" /></g><path d="M2 2h19v5H2zM10 11h20v5H10z" fill="#1450b8" /><path d="M5 17l4-7 3 4" fill="none" stroke="#0a0" strokeWidth="2" /><path d="M13 27l4-7" stroke="#0a0" strokeWidth="2" /><path d="M17 20l5 6" stroke="#f00" strokeWidth="2" /><path d="M22 26l4-7" stroke="#0a0" strokeWidth="2" /></svg>
          </IconButton>
          <IconButton aria-label="Collapse"><svg width="15" height="16" fill="none" stroke="#444" strokeWidth="2"><path d="M7 1L2 8l5 7M13 1L8 8l5 7" /></svg></IconButton>
        </BarIcons>
        <ScrollTrack>
          <ScrollStep aria-label="Scroll left"><Chevron d="M8 1L4 5l4 4" /></ScrollStep>
          <ScrollGap />
          <ScrollThumb />
          <ScrollStep aria-label="Scroll right"><Chevron d="M4 1l4 4-4 4" /></ScrollStep>
        </ScrollTrack>
        <BarIcons $gap={12}>
          <IconButton aria-label="Go to date">
            <svg width="34" height="32"><rect x="7" y="4" width="24" height="22" fill="#fff" stroke="#bbb" /><path d="M7 4h24v8H7z" fill="#1888b8" /><path d="M10 16h20M10 20h20M10 24h20M14 13v13M20 13v13M26 13v13" stroke="#ccc" /><path d="M13 1v7M26 1v7" stroke="#ccc" strokeWidth="3" /><rect x="23" y="16" width="5" height="5" fill="none" stroke="#f00" strokeWidth="2" /><path d="M1 23L11 14v5h11v8H11v4z" fill="#48d048" stroke="#18981c" /></svg>
          </IconButton>
          <IconButton aria-label="Undo">
            <svg width="28" height="28"><path d="M2 9L11 2v4c14 0 17 14 5 20c5-8 3-12-5-13v4z" fill="#1c70e8" stroke="#1040a0" /></svg>
          </IconButton>
          <IconButton aria-label="Redo">
            <svg width="28" height="28"><path d="M26 9L17 2v4c-14 0-17 14-5 20c-5-8-3-12 5-13v4z" fill="#6c9cd8" stroke="#6890c4" /></svg>
          </IconButton>
          <IconButton aria-label="Chart settings">
            <svg width="30" height="32"><path d="M8 12v18M23 1v29" stroke="#444" /><rect x="3" y="15" width="9" height="12" fill="#e04848" stroke="#902020" /><rect x="18" y="5" width="10" height="21" fill="#30d040" stroke="#108020" /><path d={wrench} fill="#fff" stroke="#000" strokeWidth="2" /></svg>
          </IconButton>
          <IconButton aria-label="Fit zoom">
            <svg width="32" height="32"><path d="M20 19L28 28" stroke="#000" strokeWidth="5" /><circle cx="12" cy="12" r="9" fill="#d4d4d4" stroke="#000" strokeWidth="2" /><path d="M28 3v15M25 6l3-4 3 4M25 15l3 4 3-4M1 26h15M5 23l-4 3 4 3M12 23l4 3-4 3" stroke="#0000f0" strokeWidth="2" fill="none" /></svg>
          </IconButton>
          <IconButton aria-label="Zoom out"><Lens sign="M7 12h10" /></IconButton>
          <IconButton aria-label="Zoom in"><Lens sign="M7 12h10M12 7v10" /></IconButton>
          <IconButton aria-label="Hide toolbar">
            <svg width="30" height="26"><rect x="1" y="1" width="28" height="10" fill="#eee" stroke="#999" /><path d="M4 6h22" stroke="#333" strokeWidth="5" strokeDasharray="4 2" /><path d="M13 13h4v5h4l-6 7-6-7h4z" fill="#1c60c8" /></svg>
          </IconButton>
        </BarIcons>
      </BottomBar>
    </Window>
  );
}
